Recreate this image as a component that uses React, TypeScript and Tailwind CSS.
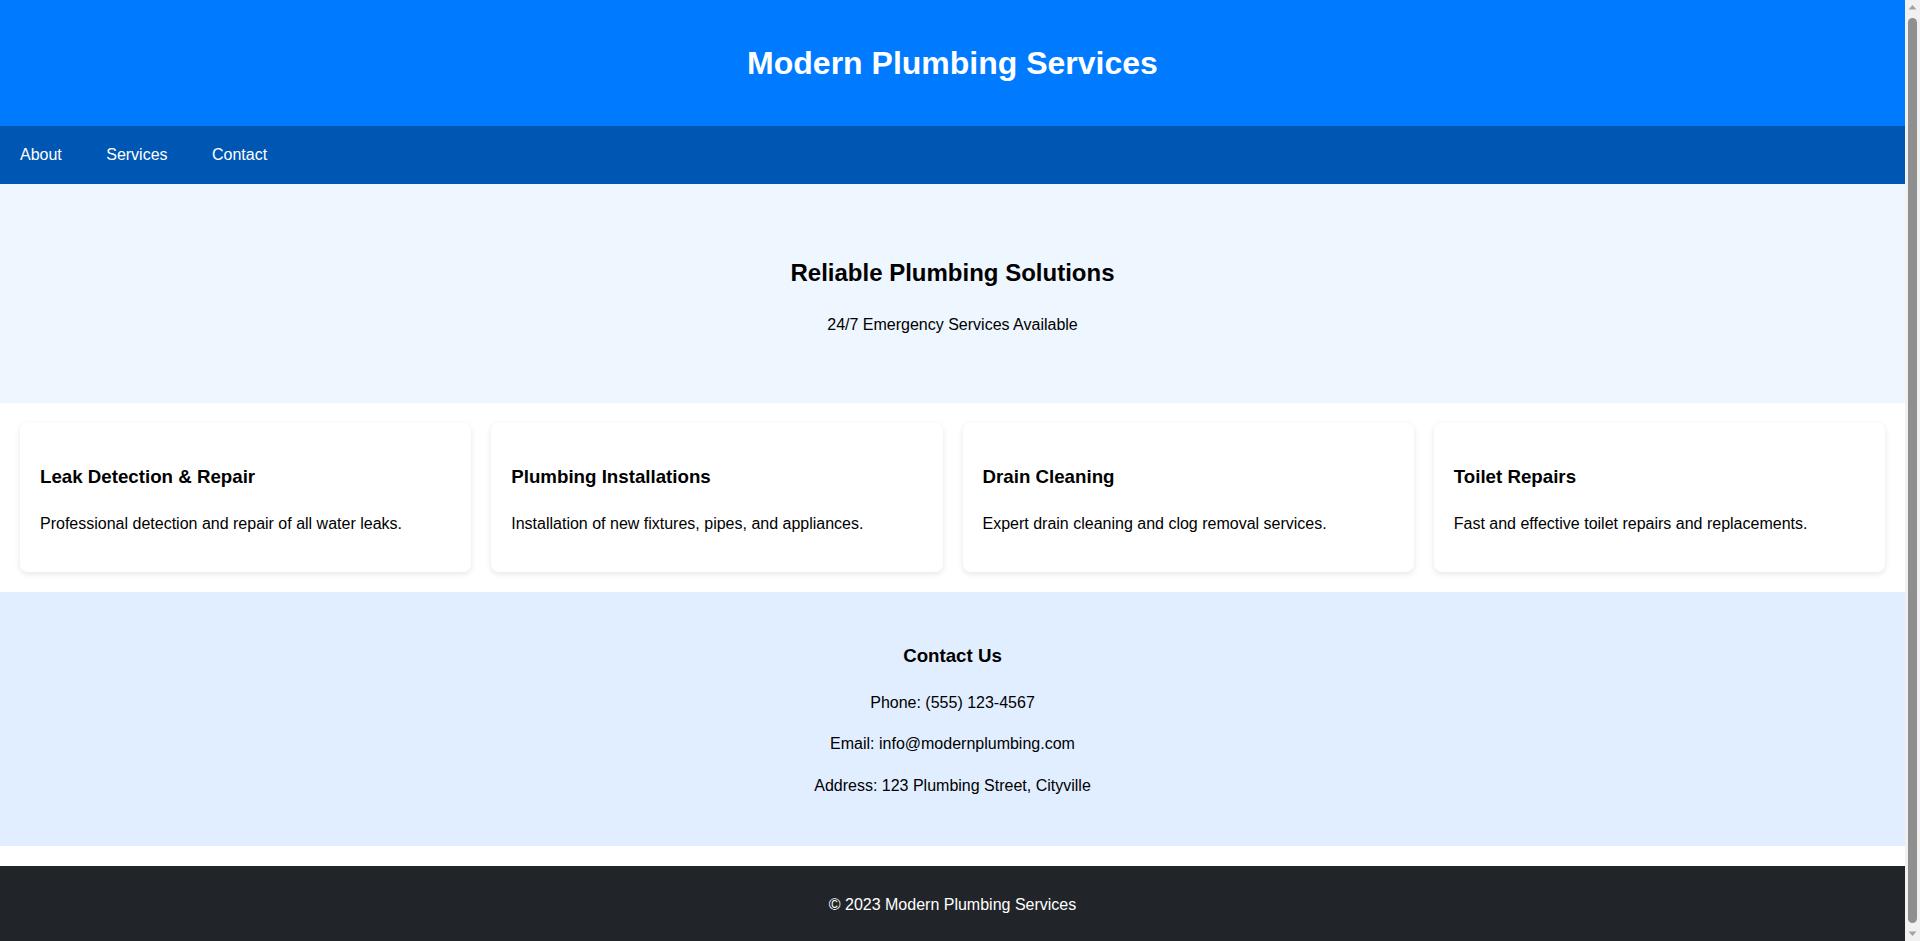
const services = [
  { title: "Leak Detection & Repair", text: "Professional detection and repair of all water leaks." },
  { title: "Plumbing Installations", text: "Installation of new fixtures, pipes, and appliances." },
  { title: "Drain Cleaning", text: "Expert drain cleaning and clog removal services." },
  { title: "Toilet Repairs", text: "Fast and effective toilet repairs and replacements." }
];

const links = ["About", "Services", "Contact"];

function ScrollBar() {
  return (
    <div className="fixed top-0 right-0 flex h-screen w-[15px] flex-col items-center bg-[#f1f1f1]">
      <svg width="15" height="15" viewBox="0 0 15 15" className="shrink-0">
        <path d="M3.5 9.5 L7.5 5 L11.5 9.5 Z" fill="#a3a3a3" />
      </svg>
      <div className="my-[3px] w-[9px] flex-1 rounded-full bg-[#8f8f8f]" />
      <svg width="15" height="15" viewBox="0 0 15 15" className="shrink-0">
        <path d="M3.5 5.5 L7.5 10 L11.5 5.5 Z" fill="#a3a3a3" />
      </svg>
    </div>
  );
}

export default function App() {
  return (
    <div className="min-h-screen bg-white font-['Liberation_Sans',Arial,sans-serif] text-base leading-[1.6] text-black">
      <div className="w-[1905px]">
        <header className="bg-[#007bff] py-[37px] text-center text-white">
          <h1 className="text-[32px] font-bold leading-[52px]">Modern Plumbing Services</h1>
        </header>

        <nav className="flex gap-[4.4px] bg-[#0056b3] py-4">
          {links.map((link) => (
            <a key={link} href="#" className="px-5 text-white">
              {link}
            </a>
          ))}
        </nav>

        <section className="bg-[#eef6ff] pt-[50px] pb-[50px] text-center">
          <h2 className="my-[19.92px] text-2xl font-bold leading-[1.6]">Reliable Plumbing Solutions</h2>
          <p className="my-4">24/7 Emergency Services Available</p>
        </section>

        <section className="grid grid-cols-4 gap-5 p-5">
          {services.map((service) => (
            <div key={service.title} className="rounded-lg bg-white p-5 shadow-[0_2px_6px_rgba(0,0,0,0.1)]">
              <h3 className="my-[18.72px] text-[18.72px] font-bold leading-[1.6]">{service.title}</h3>
              <p className="my-4">{service.text}</p>
            </div>
          ))}
        </section>

        <section className="bg-[#e0eeff] pt-[30px] pb-[31px] text-center">
          <h3 className="my-[18.72px] text-[18.72px] font-bold leading-[1.6]">Contact Us</h3>
          <p className="my-4">Phone: (555) 123-4567</p>
          <p className="my-4">Email: info@modernplumbing.com</p>
          <p className="my-4">Address: 123 Plumbing Street, Cityville</p>
        </section>

        <footer className="mt-5 bg-[#212529] pt-[26px] pb-[32px] text-center text-white">
          <p>© 2023 Modern Plumbing Services</p>
        </footer>
      </div>
      <ScrollBar />
    </div>
  );
}
